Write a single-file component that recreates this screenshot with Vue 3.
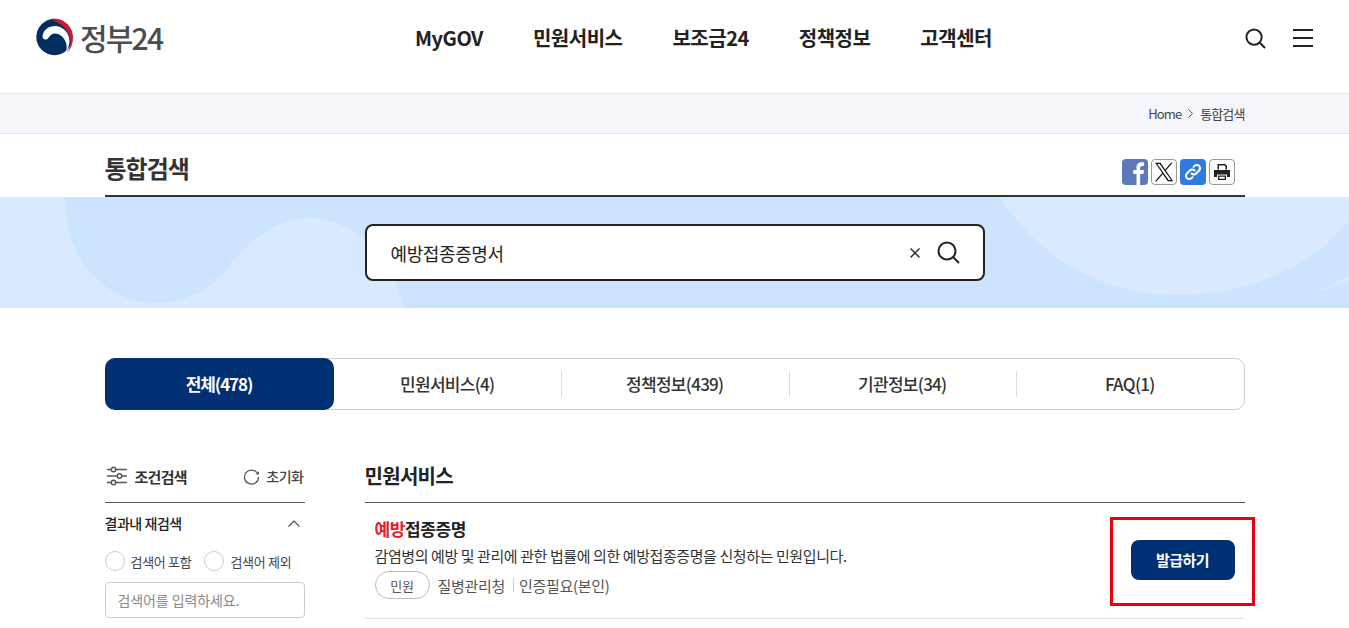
<script setup>
const navItems = ['MyGOV', '민원서비스', '보조금24', '정책정보', '고객센터']
const tabs = [
  { label: '전체(478)', active: true },
  { label: '민원서비스(4)' },
  { label: '정책정보(439)' },
  { label: '기관정보(34)' },
  { label: 'FAQ(1)' }
]
</script>

<template>
  <div class="page">
    <header class="top">
      <a class="logo">
        <svg width="38" height="38" viewBox="0 0 38 38">
          <circle cx="18.500" cy="19" r="18.200" fill="#002f5f" />
          <path d="M15 1.200C24-.8 36 6 36.800 19C37.200 26 34.500 32 30.500 35.500C33.500 31 35 27 34.500 22.500C33.500 14 28 6 15 1.200Z" fill="#d7152f" />
          <path d="M6.500 18.500C7 12 13 8 19 8C27 8 33.500 15 33.500 23C33.500 27 32 31 30 33.500C31 30 31 27 29.500 23.500C27.500 18.500 23 15.500 19 15.500C16 15.500 14.500 17 13.500 18.500C12 20.800 10.500 22 9 21.500C7.500 21 6.500 20 6.500 18.500Z" fill="#fff" />
        </svg>
        <span class="logo-text">정부24</span>
      </a>
      <nav class="gnb">
        <a v-for="item in navItems" :key="item">{{ item }}</a>
      </nav>
      <div class="top-icons">
        <svg width="21" height="21" viewBox="0 0 22 22" fill="none" stroke="#222" stroke-width="2.100">
          <circle cx="9.500" cy="9.500" r="8" />
          <path d="M15.500 15.500L21 21" />
        </svg>
        <div class="burger"><i></i><i></i><i></i></div>
      </div>
    </header>

    <div class="crumb">
      <div class="wrap crumb-in">
        <span>Home</span>
        <svg width="7" height="9" viewBox="0 0 7 9" fill="none" stroke="#555"><path d="M1.500.5l4 4-4 4" /></svg>
        <span>통합검색</span>
      </div>
    </div>

    <div class="wrap title-row">
      <h1>통합검색</h1>
      <div class="share">
        <span class="sns fb">
          <svg width="26" height="26" viewBox="0 0 26 26"><path d="M14.500 26V15h-3.300v-4h3.300V8.200C14.500 5 16.500 3.300 19.300 3.300c1.300 0 2.500.1 2.800.2v3.500h-2c-1.500 0-1.900.8-1.900 1.900V11h3.800l-.5 4h-3.300v11z" fill="#fff" /></svg>
        </span>
        <span class="sns line">
          <svg width="20" height="20" viewBox="0 0 24 24"><path d="M14.200 10.300L22.300 1h-1.900l-7 8.100L7.800 1H1.300l8.500 12.300L1.300 23h1.900l7.400-8.600L16.500 23H23zM3.900 2.400h3l13.600 19.300h-3z" fill="#111" /></svg>
        </span>
        <span class="sns link">
          <svg width="20" height="20" viewBox="0 0 20 20" fill="none" stroke="#fff" stroke-width="2" stroke-linecap="round">
            <path d="M8.500 11.500a3.200 3.200 0 0 0 4.600 0l3-3a3.200 3.200 0 0 0-4.600-4.600l-1 1" />
            <path d="M11.500 8.500a3.200 3.200 0 0 0-4.600 0l-3 3a3.200 3.200 0 0 0 4.600 4.600l1-1" />
          </svg>
        </span>
        <span class="sns line">
          <svg width="18" height="18" viewBox="0 0 18 18" fill="#222">
            <path d="M4.500 1h7.500l2 2v3.500h-1.500V3.700L11.400 2.500H6v4H4.500z" />
            <path d="M1 7h16v7h-3v-2.500H4V14H1z" />
            <path d="M5 12.500h8V17H5zm1.300 1.200v2.100h5.400v-2.100z" />
          </svg>
        </span>
      </div>
    </div>

    <section class="hero">
      <svg class="hero-bg" width="1349" height="111" viewBox="0 197 1349 111" preserveAspectRatio="none">
        <path d="M65 197C65 260 105 303 157 303C190 303 215 285 233 262C250 238 280 218 310 218C350 218 395 255 403 308H1349V197Z" fill="#cde4fe" />
        <path d="M1000 197C1040 260 1105 295 1177 295C1250 295 1315 265 1349 220V197Z" fill="#d9eaff" />
        <path d="M1312 292C1325 288 1340 281 1349 274V280C1340 285 1325 290 1312 292Z" fill="#d9eaff" />
      </svg>
      <div class="search">
        <span class="query">예방접종증명서</span>
        <svg width="10" height="10" viewBox="0 0 10 10" stroke="#333" stroke-width="1.500"><path d="M.5.5l9 9M9.500.5l-9 9" /></svg>
        <svg width="23" height="23" viewBox="0 0 23 23" fill="none" stroke="#222" stroke-width="2">
          <circle cx="10" cy="10" r="8.500" />
          <path d="M16 16l6 6" />
        </svg>
      </div>
    </section>

    <div class="wrap tabs">
      <a v-for="t in tabs" :key="t.label" class="tab" :class="{ on: t.active }">{{ t.label }}</a>
    </div>

    <div class="wrap body">
      <aside class="side">
        <div class="side-head">
          <svg width="20" height="20" viewBox="0 0 20 20" fill="none" stroke="#555" stroke-width="1.400">
            <path d="M0 3.500h4M9 3.500h11M0 10h10M15 10h5M0 16.500h4M9 16.500h11" />
            <circle cx="6.500" cy="3.500" r="2.200" />
            <circle cx="12.500" cy="10" r="2.200" />
            <circle cx="6.500" cy="16.500" r="2.200" />
          </svg>
          <strong>조건검색</strong>
          <span class="reset">
            <svg width="17" height="17" viewBox="0 0 17 17" fill="none" stroke="#555" stroke-width="1.300">
              <path d="M14.500 5.500A7 7 0 1 0 15.500 9" />
              <path d="M16 3.200v3.300h-3.300z" fill="#555" stroke="none" />
            </svg>
            초기화
          </span>
        </div>
        <div class="side-sub">
          <span>결과내 재검색</span>
          <svg width="12" height="7" viewBox="0 0 12 7" fill="none" stroke="#444" stroke-width="1.100"><path d="M.5 6.500L6 1l5.500 5.500" /></svg>
        </div>
        <div class="radios">
          <label><i></i>검색어 포함</label>
          <label><i></i>검색어 제외</label>
        </div>
        <div class="side-input">검색어를 입력하세요.</div>
      </aside>

      <main class="result">
        <h2>민원서비스</h2>
        <div class="item">
          <div class="item-main">
            <div class="item-title"><em>예방</em>접종증명</div>
            <p>감염병의 예방 및 관리에 관한 법률에 의한 예방접종증명을 신청하는 민원입니다.</p>
            <div class="meta">
              <span class="chip">민원</span>
              <span>질병관리청</span>
              <i></i>
              <span>인증필요(본인)</span>
            </div>
          </div>
          <a class="issue">발급하기</a>
        </div>
      </main>
    </div>

    <div class="mark"></div>
  </div>
</template>

<style>
html, body { margin: 0; overflow: hidden; background: #fff; }
</style>

<style scoped>
.page {
  position: relative;
  height: 628px;
  overflow: hidden;
  font-family: "Noto Sans CJK KR", "Liberation Sans", sans-serif;
  color: #222;
}
.wrap { width: 1140px; margin: 0 auto; }

.top {
  height: 93px;
  display: flex;
  align-items: flex-start;
  justify-content: space-between;
  padding: 18px 36px 0 36px;
  box-sizing: border-box;
}
.logo { display: flex; align-items: center; gap: 6px; width: 128px; height: 38px; }
.logo-text { font-size: 30px; font-weight: 500; letter-spacing: -1.8px; color: #4d4d4f; line-height: 38px; }
.gnb { display: flex; gap: 50px; height: 38px; align-items: center; margin-right: 2px; }
.gnb a { font-size: 20px; font-weight: 700; color: #222; letter-spacing: -.5px; }
.top-icons { display: flex; gap: 27px; align-items: center; height: 38px; margin-top: 1px; }
.burger { display: flex; flex-direction: column; gap: 6px; width: 20px; }
.burger i { display: block; height: 2px; background: #222; }

.crumb { height: 41px; background: #f4f6fb; border-top: 1px solid #e4e6ea; border-bottom: 1px solid #e4e6ea; box-sizing: border-box; }
.crumb-in { height: 39px; display: flex; align-items: center; justify-content: flex-end; gap: 6px; font-size: 13px; color: #444; letter-spacing: -.9px; }

.title-row { height: 63px; display: flex; justify-content: space-between; align-items: center; border-bottom: 2px solid #333; box-sizing: border-box; padding-right: 10px; }
h1 { margin: 6px 0 0; font-size: 24px; font-weight: 700; letter-spacing: -1px; color: #333; }
.share { display: flex; gap: 3px; margin-top: 14px; }
.sns { width: 26px; height: 26px; border-radius: 4px; display: flex; align-items: center; justify-content: center; box-sizing: border-box; overflow: hidden; }
.fb { background: #5b79b8; }
.line { background: #fff; border: 1px solid #999; }
.link { background: #2f7be0; }

.hero { position: relative; height: 111px; background: #d9eaff; display: flex; align-items: center; justify-content: center; }
.hero-bg { position: absolute; left: 0; top: 0; }
.search {
  position: relative;
  width: 620px;
  height: 57px;
  box-sizing: border-box;
  background: #fff;
  border: 2px solid #222;
  border-radius: 8px;
  display: flex;
  align-items: center;
  padding: 0 23px 0 24px;
}
.query { flex: 1; font-size: 18px; letter-spacing: -.4px; color: #222; }
.search svg:first-of-type { margin-right: 17px; }

.tabs {
  display: flex;
  height: 52px;
  margin-top: 50px;
  border: 1px solid #ccc;
  border-radius: 10px;
  box-sizing: border-box;
}
.tab {
  flex: 1;
  position: relative;
  display: flex;
  align-items: center;
  justify-content: center;
  padding-bottom: 2px;
  box-sizing: border-box;
  font-size: 17px;
  font-weight: 500;
  letter-spacing: -.7px;
  color: #333;
}
.tab.on {
  flex: 0 0 229px;
  margin: -1px 0 -1px -1px;
  background: #003074;
  color: #fff;
  font-weight: 700;
  letter-spacing: -1.1px;
  border-radius: 10px;
}
.tab + .tab:not(:nth-child(2))::before {
  content: "";
  position: absolute;
  left: 0;
  top: 12px;
  bottom: 12px;
  width: 1px;
  background: #ddd;
}

.body { display: flex; gap: 60px; margin-top: 48px; }
.side { width: 200px; flex: none; }
.side-head { height: 45px; display: flex; align-items: center; gap: 8px; border-bottom: 1px solid #555; box-sizing: border-box; padding: 0 0 8px 2px; }
.side-head strong { font-size: 15px; font-weight: 700; letter-spacing: -.7px; color: #333; }
.reset { margin-left: auto; padding-right: 1px; display: flex; align-items: center; gap: 6px; font-size: 14px; font-weight: 500; letter-spacing: -.5px; color: #444; }
.side-sub { display: flex; justify-content: space-between; align-items: center; padding: 0 5px 0 0; margin-top: 10px; font-size: 14px; font-weight: 500; letter-spacing: -.45px; color: #222; }
.radios { display: flex; gap: 13px; margin-top: 18px; }
.radios label { display: flex; align-items: center; gap: 6px; font-size: 13px; letter-spacing: -.3px; color: #444; }
.radios i { width: 20px; height: 20px; border: 1px solid #ccc; border-radius: 50%; box-sizing: border-box; }
.side-input { height: 36px; margin-top: 11px; border: 1px solid #ccc; border-radius: 4px; box-sizing: border-box; padding-left: 12px; display: flex; align-items: center; font-size: 14px; letter-spacing: -.1px; color: #888; }

.result { flex: 1; }
h2 { margin: 0; height: 45px; border-bottom: 1px solid #555; box-sizing: border-box; font-size: 20px; font-weight: 700; letter-spacing: -.7px; color: #222; line-height: 36px; }
.item { display: flex; justify-content: space-between; align-items: center; border-bottom: 1px solid #e2e2e2; height: 116px; box-sizing: border-box; padding: 0 10px 2px; }
.item-main { margin-bottom: 4px; }
.item-title { font-size: 17px; font-weight: 700; letter-spacing: -.4px; color: #222; }
.item-title em { font-style: normal; color: #e0202b; }
.item-main p { margin: 4px 0 0; font-size: 15px; letter-spacing: -.41px; color: #333; line-height: 22px; }
.meta { display: flex; align-items: center; gap: 8px; margin-top: 4px; font-size: 15px; letter-spacing: -.3px; color: #555; }
.meta i { width: 1px; height: 14px; background: #ccc; margin: 0 -3px 0 0; }
.chip { width: 55px; height: 28px; box-sizing: border-box; border: 1px solid #bbb; border-radius: 14px; display: flex; align-items: center; justify-content: center; font-size: 13px; }
.issue { width: 104px; height: 40px; background: #003074; color: #fff; border-radius: 8px; display: flex; align-items: center; justify-content: center; font-size: 15px; font-weight: 700; letter-spacing: -.5px; }

.mark { position: absolute; left: 1110px; top: 517px; width: 145px; height: 89px; box-sizing: border-box; border: 3px solid #e60012; }
</style>
